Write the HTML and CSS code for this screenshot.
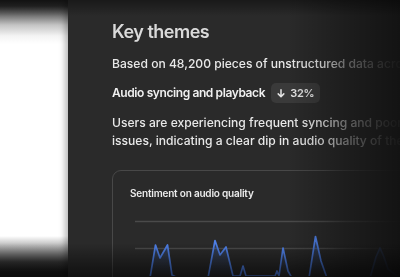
FILE: index.html
```html
<!DOCTYPE html>
<html lang="en">
<head>
<meta charset="utf-8">
<title>Key themes</title>
<link rel="stylesheet" href="styles.css">
</head>
<body>
<div class="stage">
  <aside class="side"></aside>
  <main class="panel">
    <div class="content">
      <h1 class="title">Key themes</h1>
      <p class="lead">Based on 48,200 pieces of unstructured data across all channels</p>
      <div class="theme">
        <h2 class="theme-name">Audio syncing and playback</h2>
        <span class="badge">
          <svg class="badge-icon" width="8" height="9" viewBox="0 0 8 9" aria-hidden="true">
            <path d="M4 0.8 V7.6 M1.2 4.9 L4 7.7 L6.8 4.9" fill="none" stroke="currentColor" stroke-width="1.5" stroke-linecap="round" stroke-linejoin="round"/>
          </svg>
          32%
        </span>
      </div>
      <p class="desc">Users are experiencing frequent syncing and poor audio<br>issues, indicating a clear dip in audio quality of the past month.</p>
      <section class="card">
        <h3 class="card-title">Sentiment on audio quality</h3>
        <svg class="chart" width="270" height="72" viewBox="130 205 270 72" aria-hidden="true">
          <defs>
            <linearGradient id="fill" x1="0" y1="0" x2="0" y2="1">
              <stop offset="0" stop-color="#4e7fe6" stop-opacity="0.35"/>
              <stop offset="1" stop-color="#4e7fe6" stop-opacity="0"/>
            </linearGradient>
          </defs>
          <line x1="135" y1="222.5" x2="400" y2="222.5" stroke="#4a4a4a" stroke-width="1.6"/>
          <line x1="135" y1="249.5" x2="400" y2="249.5" stroke="#4a4a4a" stroke-width="1.6"/>
          <path d="M135 279 L150 279 L155.5 246 L160 259 L167.5 246 L172 276 L178 279 L208 279 L215 241.5 L220 256 L226 248 L233 277 L240 277 L243 267 L246 277 L275 277 L277 272 L279 277 L280 270 L283 249 L288 272 L292 279 L309 279 L315.5 237.5 L321 262 L327 279 L370 279 L376 258 L380 249 L384 258 L388 270 L400 279 Z" fill="url(#fill)"/>
          <path d="M135 279 L150 279 L155.5 246 L160 259 L167.5 246 L172 276 L178 279 L208 279 L215 241.5 L220 256 L226 248 L233 277 L240 277 L243 267 L246 277 L275 277 L277 272 L279 277 L280 270 L283 249 L288 272 L292 279 L309 279 L315.5 237.5 L321 262 L327 279 L370 279 L376 258 L380 249 L384 258 L388 270 L400 279" fill="none" stroke="#4e7fe6" stroke-width="1.7" stroke-linejoin="round"/>
        </svg>
      </section>
    </div>
  </main>
  <div class="vignette"></div>
</div>
</body>
</html>
```
FILE: styles.css
```css
html, body {
  margin: 0;
  padding: 0;
  background: #141414;
}

.stage {
  position: relative;
  display: flex;
  width: 400px;
  height: 277px;
  overflow: hidden;
  font-family: Inter, "Liberation Sans", sans-serif;
}

.side {
  flex: none;
  width: 68px;
  background: linear-gradient(to bottom,
    #1e1e1e 0,
    #2a2a2a 6px,
    #6e6e6e 15px,
    #c4c4c4 25px,
    #f4f4f4 36px,
    #ffffff 44px,
    #ffffff 236px,
    #9a9a9a 250px,
    #3a3a3a 262px,
    #1c1c1c 272px);
}

.panel {
  flex: 1;
  background: #2a2a2a;
  box-shadow: -3px 0 6px rgba(0, 0, 0, 0.28);
  z-index: 1;
}

.content {
  padding: 21px 0 0 44px;
  white-space: nowrap;
  -webkit-mask-image: linear-gradient(to right, #000 0, #000 256px, rgba(0,0,0,0.6) 276px, rgba(0,0,0,0.3) 304px, rgba(0,0,0,0.08) 328px);
  mask-image: linear-gradient(to right, #000 0, #000 256px, rgba(0,0,0,0.6) 276px, rgba(0,0,0,0.3) 304px, rgba(0,0,0,0.08) 328px);
}

.title {
  margin: 0;
  font-size: 18px;
  line-height: 22px;
  font-weight: 600;
  letter-spacing: -0.5px;
  color: #dadada;
}

.lead {
  margin: 12px 0 0;
  font-size: 12.1px;
  line-height: 18px;
  font-weight: 500;
  color: #e8e8e8;
}

.theme {
  display: flex;
  align-items: center;
  gap: 6px;
  height: 20px;
  margin-top: 10px;
}

.theme-name {
  margin: 0;
  font-size: 12px;
  line-height: 18px;
  font-weight: 600;
  letter-spacing: -0.4px;
  color: #f0f0f0;
}

.badge {
  display: inline-flex;
  align-items: center;
  gap: 5px;
  height: 20px;
  padding: 0 6px;
  border-radius: 5px;
  background: #3a3a3a;
  color: #e6e6e6;
  font-size: 11px;
  font-weight: 600;
  letter-spacing: -0.2px;
}

.badge-icon {
  display: block;
}

.desc {
  margin: 11px 0 0;
  font-size: 12.1px;
  line-height: 18px;
  font-weight: 500;
  color: #e8e8e8;
}

.card {
  width: 320px;
  height: 140px;
  margin-top: 20px;
  padding: 16px 0 0 17px;
  border: 1px solid #484848;
  border-radius: 9px;
}

.card-title {
  margin: 0;
  font-size: 10px;
  line-height: 12px;
  font-weight: 600;
  letter-spacing: -0.2px;
  color: #ebebeb;
}

.chart {
  display: block;
  margin-top: 5px;
}

.vignette {
  position: absolute;
  inset: 0;
  z-index: 2;
  pointer-events: none;
  background:
    linear-gradient(to top, rgba(0,0,0,0.58) 0, rgba(0,0,0,0.48) 8px, rgba(0,0,0,0) 34px),
    linear-gradient(to bottom, rgba(0,0,0,0.4) 0, rgba(0,0,0,0) 16px),
    linear-gradient(to right, rgba(0,0,0,0) 72%, rgba(0,0,0,0.3) 86%, rgba(0,0,0,0.55) 100%);
}
```
